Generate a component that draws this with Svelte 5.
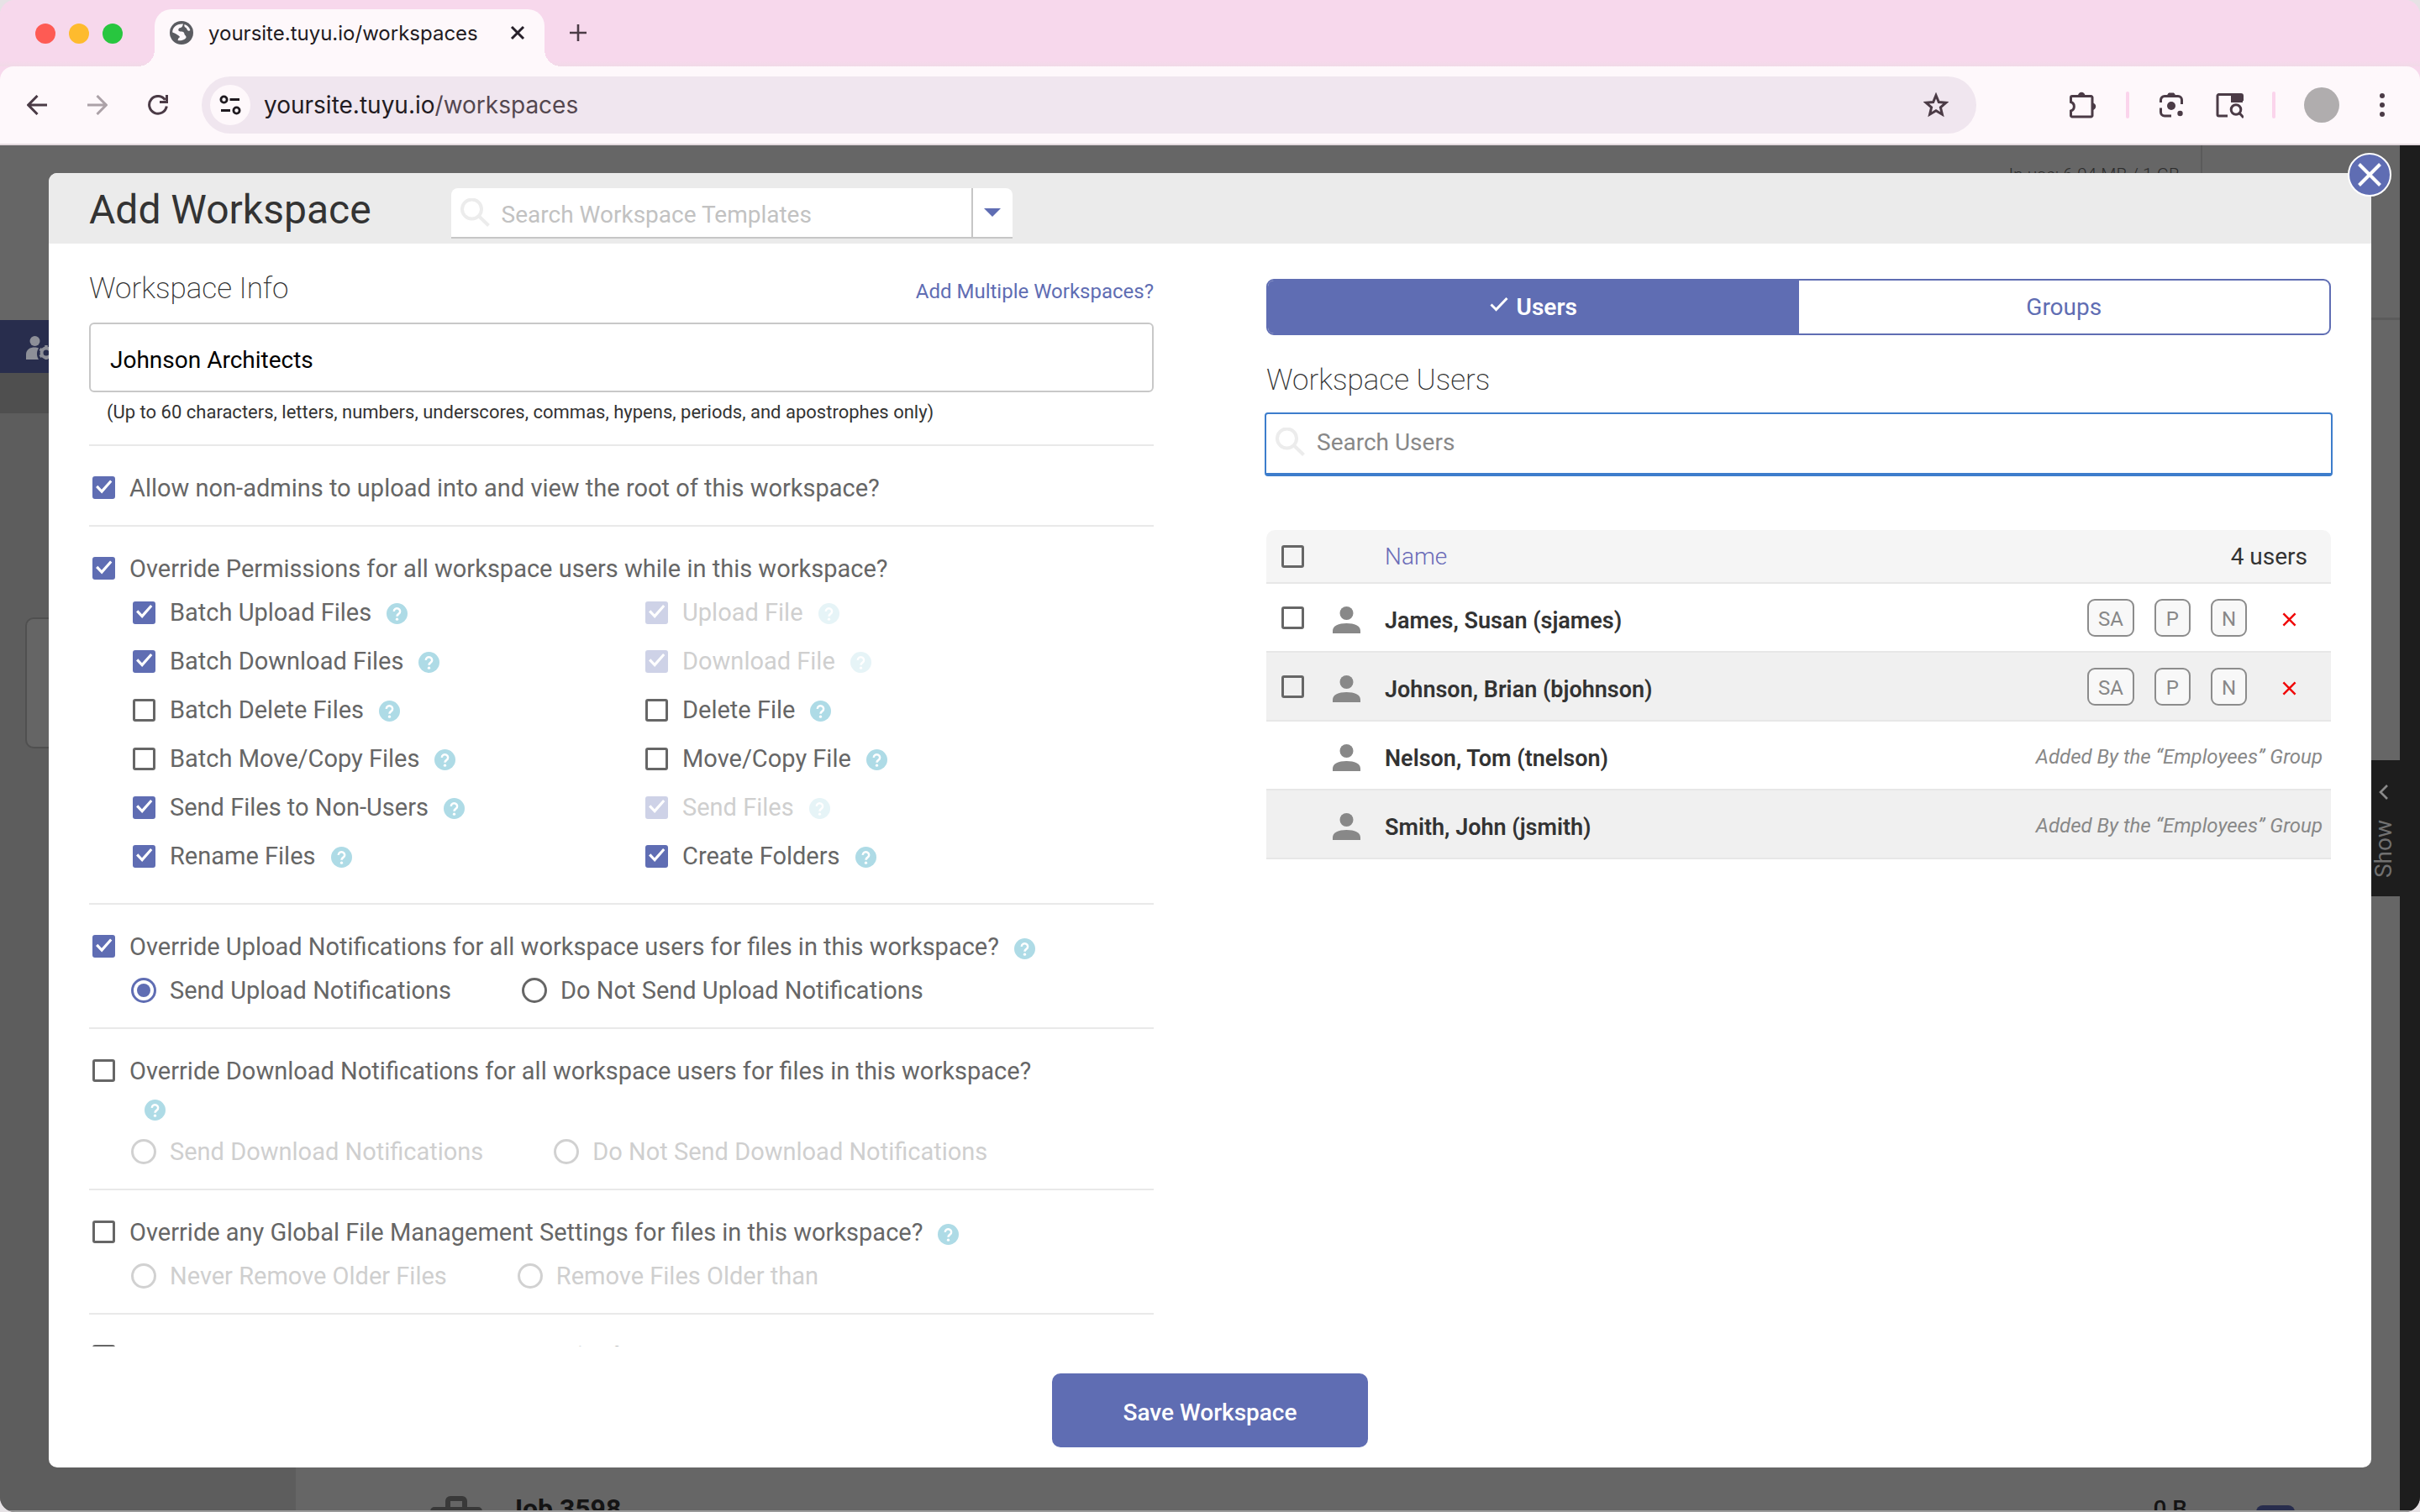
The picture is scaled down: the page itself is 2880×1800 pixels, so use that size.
<script>
  const permissions = [
    ['Batch Upload Files', true, 'Upload File', true, true],
    ['Batch Download Files', true, 'Download File', true, true],
    ['Batch Delete Files', false, 'Delete File', false, false],
    ['Batch Move/Copy Files', false, 'Move/Copy File', false, false],
    ['Send Files to Non-Users', true, 'Send Files', true, true],
    ['Rename Files', true, 'Create Folders', true, false]
  ].flatMap(([a, aOn, b, bOn, locked]) => [
    { label: a, checked: aOn, disabled: false },
    { label: b, checked: bOn, disabled: locked }
  ]);

  const overrides = [
    {
      id: 'upload',
      label: 'Override Upload Notifications for all workspace users for files in this workspace?',
      checked: true,
      choices: ['Send Upload Notifications', 'Do Not Send Upload Notifications']
    },
    {
      id: 'download',
      label: 'Override Download Notifications for all workspace users for files in this workspace?',
      checked: false,
      choices: ['Send Download Notifications', 'Do Not Send Download Notifications']
    },
    {
      id: 'management',
      label: 'Override any Global File Management Settings for files in this workspace?',
      checked: false,
      choices: ['Never Remove Older Files', 'Remove Files Older than']
    },
    {
      id: 'version',
      label: 'Override any Global File Version Settings for files in this workspace?',
      checked: false,
      choices: []
    }
  ];

  const users = [
    { name: 'James, Susan (sjames)', group: '' },
    { name: 'Johnson, Brian (bjohnson)', group: '' },
    { name: 'Nelson, Tom (tnelson)', group: 'Employees' },
    { name: 'Smith, John (jsmith)', group: 'Employees' }
  ];
</script>

{#snippet help()}<button class="help" type="button" aria-label="Help"><svg viewBox="0 0 26 26"><circle cx="13" cy="13" r="13" fill="#aedbe6" /><path d="M9.200 10.300a3.800 3.700 0 1 1 6.100 2.800c-1.500 1.100-2.300 1.500-2.300 3.300" fill="none" stroke="#fff" stroke-width="2.600" /><circle cx="13" cy="20" r="1.700" fill="#fff" /></svg></button>{/snippet}

{#snippet magnifier()}
  <svg class="magnifier" viewBox="0 0 36 34" aria-hidden="true"><circle cx="13.500" cy="13" r="11.500" /><path d="m21.500 21 12 11.500" /></svg>
{/snippet}

<div class="window">
  <header class="tabstrip">
    <div class="lights"><i class="red"></i><i class="amber"></i><i class="green"></i></div>
    <div class="tab">
      <svg class="globe" viewBox="0 0 28 28" aria-hidden="true">
        <circle cx="14" cy="14" r="14" fill="#5b5c61" />
        <path d="M16 3.500c-1 2-.5 3.500-2.500 4.200-2 .6-3 .8-3.200 2.800-.2 1.600 1.500 2 3.400 2 2.400 0 3.600 1 3.800 3 .2 1.400 1.600 1.800 2 3.200.3 1.300-.8 2.400-2.400 3.200-2.500 1.500-5.600 1.700-7.600 1l1-2.700c1.800-.4 1.800-1.700.2-2.600-2.200-1.300-3.400-2.800-7.500-4C3 8 8 3 16 3.500z" fill="#fef8fb" />
        <path d="M17.500 4c-.6 2.600.4 3.400 1.800 4 1.200.5.800 2.600 2.400 3.400 1 .5 2 .2 2.700-.3C23.400 7.500 20.800 5 17.500 4z" fill="#fef8fb" />
      </svg>
      <span class="tab-title">yoursite.tuyu.io/workspaces</span>
      <button class="icon-button tab-close" type="button" aria-label="Close tab">
        <svg viewBox="0 0 18 18"><path d="m2 2 14 14M16 2 2 16" stroke="#27202a" stroke-width="3" /></svg>
      </button>
    </div>
    <button class="icon-button new-tab" type="button" aria-label="New tab">
      <svg viewBox="0 0 20 20"><path d="M10 0v20M0 10h20" stroke="#4b3b46" stroke-width="2.600" /></svg>
    </button>
  </header>

  <nav class="toolbar" aria-label="Browser">
    <div class="history">
      <button class="icon-button" type="button" aria-label="Back"><svg viewBox="0 0 24 24"><path d="M24 12H2M12.500 1 1.700 12l10.800 11" class="line" /></svg></button>
      <button class="icon-button faded" type="button" aria-label="Forward"><svg viewBox="0 0 24 24"><path d="M0 12h22M11.500 1l10.800 11-10.800 11" class="line" /></svg></button>
      <button class="icon-button" type="button" aria-label="Reload"><svg viewBox="0 0 24 24"><path d="M22.300 13.500A10.400 10.400 0 1 1 20.500 5.800M22.500 0v8.500H14" class="line" /></svg></button>
    </div>
    <div class="omnibox">
      <button class="icon-button site-info" type="button" aria-label="Site information">
        <svg viewBox="0 0 26 26"><g fill="none" stroke="#1f1a20" stroke-width="2.800"><circle cx="5.500" cy="6.500" r="3.600" /><path d="M12.500 6.500H24M2 19.500h11" /><circle cx="20.500" cy="19.500" r="3.600" /></g></svg>
      </button>
      <span class="url">yoursite.tuyu.io<span>/workspaces</span></span>
      <button class="icon-button star" type="button" aria-label="Bookmark">
        <svg viewBox="0 0 30 30"><path d="m15 3.500 3.300 8 8.700.7-6.600 5.600 2 8.400L15 21.700l-7.400 4.500 2-8.400L3 12.200l8.700-.7z" class="line" /></svg>
      </button>
    </div>
    <div class="tools">
      <button class="icon-button tool" type="button" aria-label="Extensions">
        <svg viewBox="0 0 34 34"><path d="M4 6.500h22.500a1.500 1.500 0 0 1 1.500 1.500v21.500a1.500 1.500 0 0 1-1.500 1.500H4a1.500 1.500 0 0 1-1.500-1.500V24a5.500 5.500 0 0 0 0-10.500V8A1.500 1.500 0 0 1 4 6.500z" class="line" /><path d="M11 6a4.200 4.200 0 0 1 8.400 0zM28 14.500a4.200 4.200 0 0 1 0 8.400z" fill="#4b3b46" /></svg>
      </button>
      <i class="divider"></i>
      <button class="icon-button tool" type="button" aria-label="Search with camera">
        <svg viewBox="0 0 34 34"><path d="M3.500 14v-3A4.500 4.500 0 0 1 8 6.500h16a4.500 4.500 0 0 1 4.500 4.500v5M3.500 20.500v5A4.500 4.500 0 0 0 8 30h8" class="line" /><path d="M11 6l2-3h6l2 3z" fill="#4b3b46" stroke="#4b3b46" stroke-width="1" /><circle cx="16" cy="18" r="5" fill="#4b3b46" /><circle cx="26.500" cy="27" r="3.200" fill="#4b3b46" /></svg>
      </button>
      <button class="icon-button tool" type="button" aria-label="Search side panel">
        <svg viewBox="0 0 34 34"><path d="M15 30H4.500A1.500 1.500 0 0 1 3 28.500V6A1.500 1.500 0 0 1 4.500 4.500H31A1.500 1.500 0 0 1 32.500 6V12" class="line" /><path d="M19 4h14v10H19z" fill="#4b3b46" /><g class="line"><circle cx="25" cy="22.500" r="5.800" /><path d="m29 26.500 5 5.500" /></g></svg>
      </button>
      <i class="divider"></i>
      <button class="avatar" type="button" aria-label="Profile"></button>
      <button class="icon-button tool" type="button" aria-label="Menu">
        <svg viewBox="0 0 34 34"><g fill="#4b3b46"><circle cx="17" cy="6" r="3" /><circle cx="17" cy="17" r="3" /><circle cx="17" cy="28" r="3" /></g></svg>
      </button>
    </div>
  </nav>

  <div class="page">
    <div class="backdrop" aria-hidden="true">
      <div class="side">
        <div class="side-top"></div>
        <div class="side-nav">
          <svg viewBox="0 0 36 28"><g fill="#8d8f98"><circle cx="10.500" cy="6" r="6" /><path d="M0 28v-6c0-6 5-8.500 10-8.500 2 0 3.600.3 5 1-2.500 3.500-2.800 9 0 13.500z" /></g><circle cx="24" cy="20" r="5.500" fill="none" stroke="#8d8f98" stroke-width="4" /><path d="M24 11v4M24 25v4M16.500 15.500l3 2M16.500 24.500l3-2M31.500 15.500l-3 2M31.500 24.500l-3-2" stroke="#8d8f98" stroke-width="3.500" /></svg>
        </div>
        <div class="side-sub"></div>
        <div class="side-card"></div>
      </div>
      <div class="main">
        <div class="main-top">
          <span class="usage">In use: 6.04 MB / 1 GB</span>
          <span class="account"></span>
        </div>
        <div class="jobs">
          <div class="job">
            <svg class="case" viewBox="0 0 62 46"><path d="M21 14V6a3 3 0 0 1 3-3h14a3 3 0 0 1 3 3v8" fill="none" stroke="#393939" stroke-width="6" /><rect y="13" width="62" height="33" rx="5" fill="#393939" /></svg>
            <b>Job 3598</b>
            <span class="size">0 B</span>
            <span class="job-button"></span>
          </div>
        </div>
      </div>
      <div class="rail"><div class="show"><svg viewBox="0 0 12 18"><path d="m10 1-8 8 8 8" fill="none" stroke="#8a8a8a" stroke-width="2.600" /></svg><span>Show</span></div></div>
    </div>

    <section class="modal" role="dialog" aria-labelledby="modal-title">
      <header class="modal-head">
        <h1 id="modal-title">Add Workspace</h1>
        <div class="template-search">
          {@render magnifier()}
          <input type="text" placeholder="Search Workspace Templates" aria-label="Search Workspace Templates" />
          <button type="button" aria-label="Show templates"><svg viewBox="0 0 20 10"><path d="M0 0h20L10 10z" fill="#5f6db3" /></svg></button>
        </div>
      </header>

      <div class="modal-body">
        <form class="info">
          <section class="block first">
            <div class="heading-row">
              <h2>Workspace Info</h2>
              <a href="#multiple">Add Multiple Workspaces?</a>
            </div>
            <input class="name-field" type="text" value="Johnson Architects" aria-label="Workspace name" aria-describedby="name-hint" />
            <p id="name-hint">(Up to 60 characters, letters, numbers, underscores, commas, hypens, periods, and apostrophes only)</p>
          </section>

          <section class="block">
            <div class="question">
              <input type="checkbox" id="allow" checked />
              <div><label for="allow">Allow non-admins to upload into and view the root of this workspace?</label></div>
            </div>
          </section>

          <section class="block">
            <div class="question">
              <input type="checkbox" id="permissions" checked />
              <div><label for="permissions">Override Permissions for all workspace users while in this workspace?</label></div>
            </div>
            <div class="permissions">
              {#each permissions as p, i}
                <div class="option" class:disabled={p.disabled}>
                  <input type="checkbox" id="perm-{i}" checked={p.checked} disabled={p.disabled} />
                  <label for="perm-{i}">{p.label}</label>{@render help()}
                </div>
              {/each}
            </div>
          </section>

          {#each overrides as o}
            <section class="block">
              <div class="question">
                <input type="checkbox" id={o.id} checked={o.checked} />
                <div><label for={o.id}>{o.label}</label>{@render help()}</div>
              </div>
              {#if o.choices.length}
                <div class="choices">
                  {#each o.choices as c, i}
                    <div class="option" class:disabled={!o.checked}>
                      <input type="radio" id="{o.id}-{i}" name={o.id} checked={o.checked && i === 0} disabled={!o.checked} />
                      <label for="{o.id}-{i}">{c}</label>
                    </div>
                  {/each}
                </div>
              {/if}
            </section>
          {/each}
        </form>

        <div class="people">
          <div class="switch">
            <button type="button" class="active"><svg viewBox="0 0 22 18"><path d="m1.500 9.500 6 6L20.500 2" fill="none" stroke="#fff" stroke-width="3" /></svg>Users</button>
            <button type="button">Groups</button>
          </div>
          <h2>Workspace Users</h2>
          <div class="user-search">
            {@render magnifier()}
            <input type="text" placeholder="Search Users" aria-label="Search Users" />
          </div>
          <table>
            <thead>
              <tr>
                <th class="pick"><input type="checkbox" aria-label="Select all users" /></th>
                <th class="face"></th>
                <th class="name">Name</th>
                <th class="count">4 users</th>
              </tr>
            </thead>
            <tbody>
              {#each users as u}
                <tr>
                  <td class="pick">{#if !u.group}<input type="checkbox" aria-label="Select {u.name}" />{/if}</td>
                  <td class="face"><svg viewBox="0 0 33 32" aria-hidden="true"><circle cx="16.500" cy="8" r="8" /><path d="M0 32v-3c0-6 7-9 16.500-9S33 23 33 29v3z" /></svg></td>
                  <td class="name">{u.name}</td>
                  <td class="actions">
                    {#if u.group}
                      <em>Added By the “{u.group}” Group</em>
                    {:else}
                      <div>
                        <button class="badge" type="button">SA</button>
                        <button class="badge" type="button">P</button>
                        <button class="badge" type="button">N</button>
                        <button class="remove" type="button" aria-label="Remove {u.name}"><svg viewBox="0 0 18 18"><path d="m1.500 1.500 15 15M16.500 1.500l-15 15" stroke="#f00000" stroke-width="2.600" /></svg></button>
                      </div>
                    {/if}
                  </td>
                </tr>
              {/each}
            </tbody>
          </table>
        </div>
      </div>

      <footer class="modal-foot"><button type="button">Save Workspace</button></footer>

      <button class="close" type="button" aria-label="Close"><svg viewBox="0 0 28 28"><path d="m1.500 1.500 25 25M26.500 1.500l-25 25" stroke="#fff" stroke-width="4" /></svg></button>
    </section>
  </div>
</div>

<style>
  :global(body) {
    background: #e6e2e5;
    font-family: Roboto, 'Liberation Sans', sans-serif;
  }
  .window, .window :global(*) { box-sizing: border-box; }
  .window {
    height: 100vh;
    display: flex;
    flex-direction: column;
    overflow: hidden;
    border-radius: 18px;
    background: #f7d8ec;
  }
  svg { display: block; }
  button, input { font: inherit; color: inherit; margin: 0; }
  button { border: 0; padding: 0; background: none; cursor: pointer; }
  h1, h2, p { margin: 0; }
  .line { fill: none; stroke: #4b3b46; stroke-width: 3; }
  .icon-button { display: grid; place-items: center; flex: none; }

  /* Browser chrome */
  .tabstrip {
    display: flex;
    align-items: stretch;
    height: 79px;
    padding: 11px 0 0 42px;
    background: linear-gradient(#f7d8ec 92%, #f1dae7);
    font-family: Inter, Roboto, sans-serif;
  }
  .lights { display: flex; gap: 16px; padding-top: 17px; }
  .lights i { width: 24px; height: 24px; border-radius: 50%; }
  .red { background: #fe5b54; }
  .amber { background: #febb2e; }
  .green { background: #28c63f; }
  .tab {
    position: relative;
    display: flex;
    align-items: center;
    width: 464px;
    margin-left: 38px;
    padding: 0 23px 12px 18px;
    border-radius: 20px 20px 0 0;
    background: #fef8fb;
  }
  .tab::before, .tab::after {
    content: '';
    position: absolute;
    bottom: 0;
    width: 20px;
    height: 20px;
  }
  .tab::before { right: 100%; background: radial-gradient(circle at 0 0, transparent 20px, #fef8fb 20px); }
  .tab::after { left: 100%; background: radial-gradient(circle at 100% 0, transparent 20px, #fef8fb 20px); }
  .globe { width: 28px; height: 28px; }
  .tab-title { flex: 1; margin-left: 18px; font-size: 24px; color: #221b22; white-space: nowrap; }
  .tab-close svg { width: 18px; height: 18px; }
  .new-tab { margin-left: 30px; padding-bottom: 12px; }
  .new-tab svg { width: 20px; height: 20px; }

  .toolbar {
    display: flex;
    align-items: center;
    height: 94px;
    padding: 0 28px 0 32px;
    border-radius: 16px 16px 0 0;
    border-bottom: 2px solid #e4dadf;
    background: #fef8fb;
    font-family: Inter, Roboto, sans-serif;
  }
  .history { display: flex; gap: 48px; }
  .history svg { width: 24px; height: 24px; }
  .faded { opacity: 0.45; }
  .omnibox {
    flex: 1;
    display: flex;
    align-items: center;
    height: 68px;
    margin: 0 110px 0 40px;
    padding: 0 33px 0 10px;
    border-radius: 34px;
    background: #f0e6ef;
  }
  .site-info { width: 48px; height: 48px; border-radius: 50%; background: #fef8fb; }
  .site-info svg { width: 26px; height: 26px; }
  .url { flex: 1; margin-left: 16px; font-size: 28px; color: #221b22; }
  .url span { color: #54474f; }
  .star svg { width: 30px; height: 30px; }
  .tools { display: flex; align-items: center; gap: 34px; }
  .tool { width: 34px; }
  .tool svg { width: 34px; height: 34px; }
  .divider { width: 4px; height: 32px; border-radius: 2px; background: #fbd5ec; }
  .avatar { width: 42px; height: 42px; border-radius: 50%; background: #b0adae; }

  /* Dimmed page under the dialog */
  .page {
    flex: 1;
    min-height: 0;
    display: grid;
    grid-template: minmax(0, 1fr) / minmax(0, 1fr);
    overflow: hidden;
    background: #666;
    border-bottom: 2px solid #9a9a9a;
  }
  .backdrop {
    grid-area: 1 / 1;
    display: grid;
    grid-template-columns: 352px minmax(0, 1fr) 24px;
    min-height: 0;
    overflow: hidden;
  }
  .side { background: #5d5d5d; }
  .side-top { height: 208px; background: #666; }
  .side-nav { height: 63px; padding: 19px 0 0 31px; background: #282d4d; }
  .side-nav svg { width: 36px; height: 28px; }
  .side-sub { height: 48px; background: #4f4f4f; }
  .side-card { height: 156px; margin: 243px 30px 0; border: 2px solid #505050; border-radius: 10px; background: #656565; }
  .main { display: flex; flex-direction: column; min-height: 0; }
  .main-top { display: flex; justify-content: flex-end; height: 208px; border-bottom: 3px solid #5b5b5b; }
  .usage {
    padding: 23px 25px 0 0;
    border-right: 2px solid #5a5a5a;
    font-size: 21px;
    line-height: 24px;
    font-weight: 300;
    color: #2c2c2c;
  }
  .account { width: 235px; }
  .jobs { flex: 1; min-height: 0; display: flex; flex-direction: column; justify-content: flex-end; }
  .job {
    display: flex;
    align-items: center;
    gap: 30px;
    height: 60px;
    margin-bottom: -28px;
    padding: 0 125px 0 160px;
    color: #141414;
  }
  .case { width: 62px; height: 46px; margin-top: 16px; }
  .job b { flex: 1; font-size: 32px; }
  .size { margin-right: 52px; font-size: 28px; font-weight: 500; }
  .job-button { align-self: flex-end; width: 46px; height: 34px; border-radius: 8px; background: #282d4d; }
  .rail { position: relative; background: #1d1d1d; }
  .show {
    position: absolute;
    top: 732px;
    right: 100%;
    display: flex;
    flex-direction: column;
    align-items: center;
    gap: 24px;
    width: 34px;
    height: 162px;
    padding: 29px 4px 0 0;
    background: #1d1d1d;
    color: #707070;
  }
  .show svg { width: 12px; height: 18px; }
  .show span { writing-mode: vertical-rl; rotate: 180deg; font-size: 28px; line-height: 34px; }

  /* Dialog */
  .modal {
    grid-area: 1 / 1;
    position: relative;
    display: flex;
    flex-direction: column;
    min-height: 0;
    margin: 33px 58px 51px;
    border-radius: 10px;
    background: #fff;
    color: #666;
  }
  .close {
    position: absolute;
    top: -24px;
    right: -24px;
    display: grid;
    place-items: center;
    width: 52px;
    height: 52px;
    border: 2px solid #fff;
    border-radius: 50%;
    background: #5f6db3;
  }
  .close svg { width: 28px; height: 28px; }
  .modal-head {
    display: flex;
    gap: 95px;
    height: 84px;
    padding: 0 48px;
    border-radius: 10px 10px 0 0;
    background: #ebebeb;
  }
  h1 { font-size: 48px; font-weight: 400; line-height: 88px; color: #333; }
  h2 { font-size: 35px; font-weight: 200; line-height: 40px; color: #333; }
  .template-search {
    display: flex;
    align-items: center;
    width: 668px;
    height: 60px;
    margin-top: 18px;
    padding-left: 11px;
    border-bottom: 2px solid #c6c6c6;
    border-radius: 8px 8px 0 0;
    background: #fff;
  }
  .magnifier { flex: none; width: 36px; height: 34px; fill: none; stroke: #ececec; stroke-width: 4; }
  .template-search input {
    flex: 1;
    min-width: 0;
    height: 100%;
    padding: 4px 0 0 13px;
    border: 0;
    outline: 0;
    background: none;
    font-size: 28px;
  }
  .template-search input::placeholder { color: #c2c2c2; }
  .template-search button {
    display: grid;
    place-items: center;
    width: 49px;
    height: 100%;
    border-left: 2px solid #c6c6c6;
  }
  .template-search button svg { width: 20px; height: 10px; }

  .modal-body {
    flex: 1;
    min-height: 0;
    display: grid;
    grid-template-columns: minmax(0, 1fr) minmax(0, 1fr);
    gap: 134px;
    padding: 0 48px;
    overflow: hidden;
  }
  .info { min-height: 0; overflow: hidden; }
  .block { padding: 28px 0 22px; border-bottom: 2px solid #e9e9e9; }
  .block.first { padding: 34px 0 24px; }
  .heading-row { display: flex; justify-content: space-between; align-items: baseline; }
  .heading-row a { font-size: 24px; color: #5f6db3; text-decoration: none; }
  .name-field {
    display: block;
    width: 100%;
    height: 83px;
    margin-top: 20px;
    padding: 6px 23px 0;
    border: 2px solid #c8c8c8;
    border-radius: 6px;
    background: #fff;
    font-size: 28px;
    color: #000;
  }
  #name-hint { margin-top: 10px; padding-left: 21px; font-size: 22px; line-height: 28px; color: #333; }

  .question { display: flex; gap: 17px; padding: 0 120px 0 4px; font-size: 29px; line-height: 44px; }
  .question > input { margin-top: 8px; }
  .question > div { flex: 1; }
  .option { display: flex; align-items: center; height: 36px; font-size: 29px; }
  .option label { margin-left: 17px; }
  .option.disabled { color: #cfcfcf; }
  .option.disabled .help { opacity: 0.3; }
  .permissions {
    display: grid;
    grid-template-columns: 610px 1fr;
    row-gap: 22px;
    margin-top: 12px;
    padding: 0 0 16px 52px;
  }
  .choices { display: flex; gap: 84px; margin-top: 12px; padding: 0 0 4px 50px; }
  .choices .option label { margin-left: 16px; }
  .help { display: inline-block; width: 25px; height: 25px; margin-left: 18px; vertical-align: middle; }
  .option .help { margin-top: 2px; }
  .help svg { width: 25px; height: 25px; }

  input[type='checkbox'], input[type='radio'] {
    appearance: none;
    display: grid;
    place-items: center;
    flex: none;
    width: 27px;
    height: 27px;
    border: 3px solid #666;
    border-radius: 3px;
    background: transparent;
  }
  input[type='radio'] { width: 30px; height: 30px; border-radius: 50%; }
  input[type='checkbox']:checked { border-color: #5f6db3; background: #5f6db3; }
  input[type='checkbox']:checked::before {
    content: '';
    width: 21px;
    height: 21px;
    background: #fff;
    clip-path: polygon(5% 48%, 16% 37%, 38% 61%, 86% 7%, 97% 17%, 39% 83%);
  }
  input[type='radio']:checked { border-color: #5f6db3; }
  input[type='radio']:checked::before { content: ''; width: 16px; height: 16px; border-radius: 50%; background: #5f6db3; }
  input[type='checkbox']:disabled, input[type='radio']:disabled { opacity: 0.3; }

  .people { padding-top: 42px; }
  .switch {
    display: grid;
    grid-template-columns: 1fr 1fr;
    height: 67px;
    margin-bottom: 34px;
    border: 2px solid #5f6db3;
    border-radius: 9px;
    overflow: hidden;
    font-size: 28px;
    color: #5f6db3;
  }
  .switch button { display: flex; align-items: center; justify-content: center; }
  .switch .active { gap: 10px; background: #5f6db3; color: #fff; font-weight: 600; }
  .switch svg { width: 22px; height: 18px; margin-bottom: 8px; }
  .user-search {
    display: flex;
    align-items: center;
    height: 76px;
    margin: 18px -2px 64px;
    padding: 0 0 4px 11px;
    border: 2px solid #3d7dcc;
    border-bottom-width: 4px;
    border-radius: 4px;
  }
  .user-search input {
    flex: 1;
    height: 100%;
    padding: 0 0 0 13px;
    border: 0;
    outline: 0;
    background: none;
    font-size: 28px;
  }
  .user-search input::placeholder { color: #888; }

  table { width: 100%; border-collapse: separate; border-spacing: 0; }
  th, td { height: 82px; padding: 0; border-bottom: 2px solid #e7e7e7; text-align: left; vertical-align: middle; }
  th { height: 64px; background: #f5f5f5; font-weight: 400; }
  th:first-child { border-top-left-radius: 10px; }
  th:last-child { border-top-right-radius: 10px; }
  tbody tr:nth-child(even) td { background: #f0f0f0; }
  .pick { width: 79px; padding-left: 18px; }
  .face { width: 62px; }
  td.face { padding-top: 6px; }
  td.name { padding-top: 8px; font-size: 27px; font-weight: 600; color: #333; }
  .face svg { width: 33px; height: 32px; fill: #888; }
  th.name { font-size: 28px; font-weight: 300; color: #6a6bb8; }
  .count { padding-right: 28px; font-size: 28px; text-align: right; color: #333; }
  .actions { text-align: right; }
  .actions div { display: flex; align-items: center; justify-content: flex-end; gap: 24px; padding-right: 41px; }
  .badge {
    min-width: 43px;
    height: 45px;
    padding: 3px 11px 0;
    border: 2px solid #8c8c8c;
    border-radius: 9px;
    background: #f8f8f8;
    font-size: 24px;
    color: #888;
  }
  .remove { margin: 4px 0 0 18px; }
  .remove svg { width: 17px; height: 17px; }
  .actions em { display: block; padding: 4px 10px 0 0; font-size: 24px; color: #888; }

  .modal-foot { display: flex; justify-content: center; padding: 32px 0 24px; }
  .modal-foot button {
    min-width: 376px;
    height: 88px;
    padding-top: 4px;
    border-radius: 10px;
    background: #5f6db3;
    font-size: 28px;
    font-weight: 500;
    color: #fff;
  }
</style>
